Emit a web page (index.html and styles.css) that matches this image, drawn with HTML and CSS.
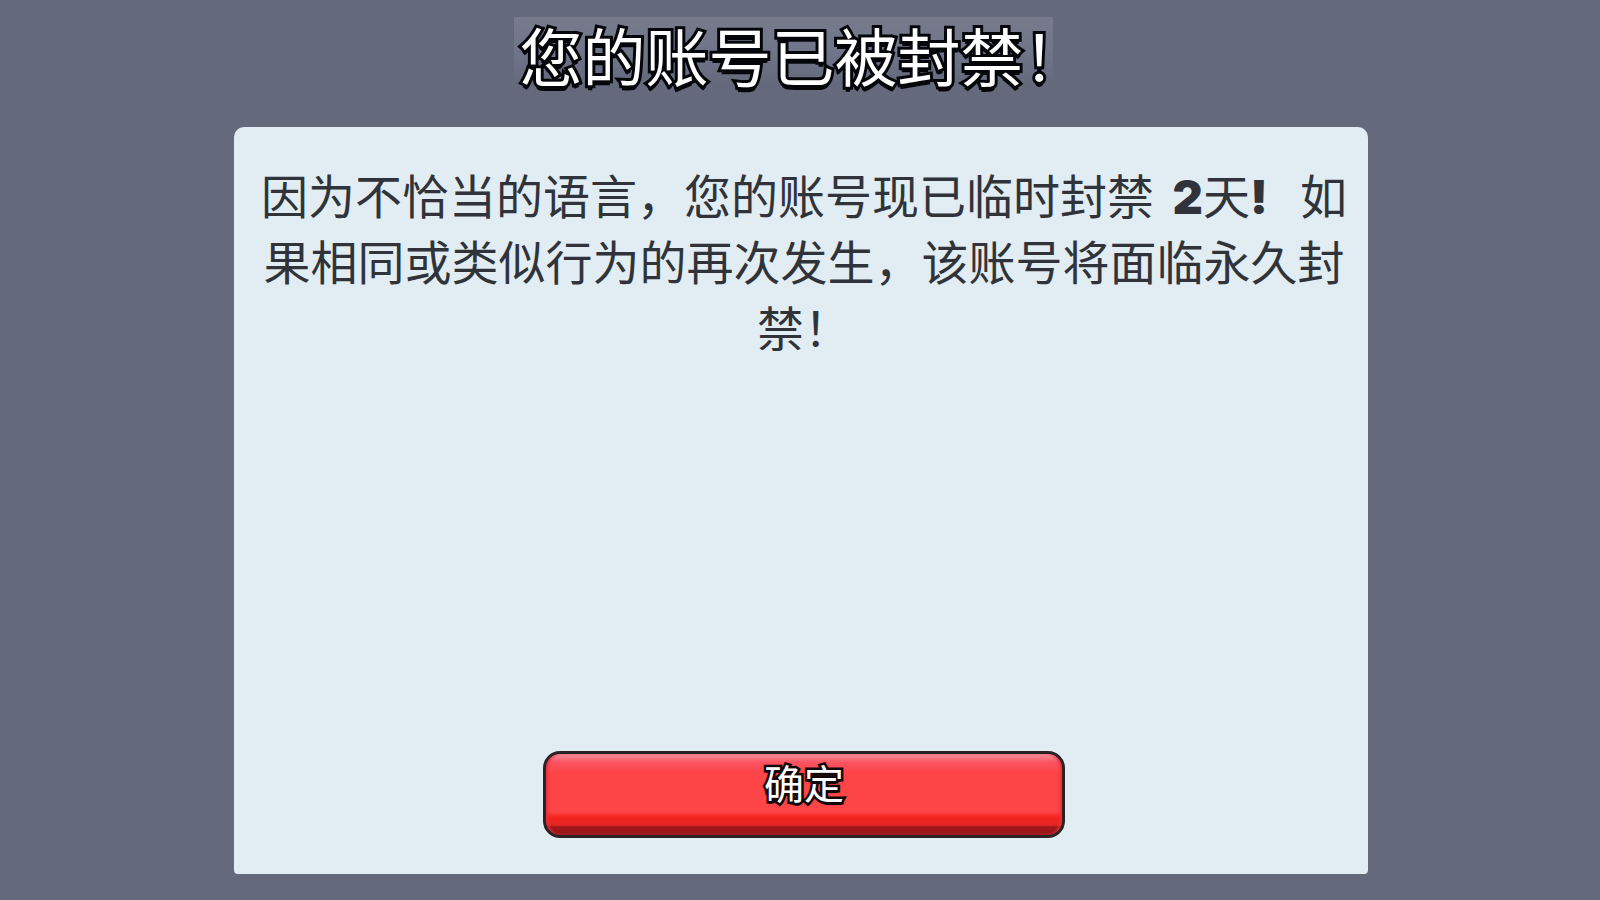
FILE: index.html
```html
<!DOCTYPE html>
<html lang="zh-CN">
<head>
<meta charset="utf-8">
<meta name="viewport" content="width=device-width, initial-scale=1">
<title>您的账号已被封禁！</title>
<link rel="stylesheet" href="styles.css">
</head>
<body>
<main class="screen">
  <h1 class="title">您的账号已被封禁！</h1>
  <section class="panel">
    <p class="message">因为不恰当的语言，您的账号现已临时封禁 <strong class="days">2</strong>天<strong class="bang">!</strong>如果相同或类似行为的再次发生，该账号将面临永久封禁！</p>
    <button class="confirm" type="button">确定</button>
  </section>
</main>
</body>
</html>
```
FILE: styles.css
```css
* {
  box-sizing: border-box;
}

body {
  margin: 0;
  background: #64697c;
  font-family: "Noto Sans CJK SC", "Noto Sans", sans-serif;
}

.screen {
  display: flex;
  flex-direction: column;
  align-items: center;
  min-height: 100vh;
  padding: 17px 14.5% 26px;
}

.title {
  margin: 0 0 36px;
  padding-left: 6px;
  background: linear-gradient(#777b8b, #70758a 45%, #64697c 90%) no-repeat 0 0 / calc(100% - 34px) 100%;
  color: #fff;
  font-size: 63px;
  font-weight: 400;
  line-height: 74px;
  white-space: nowrap;
  -webkit-text-stroke: 6px #05060a;
  paint-order: stroke fill;
  text-shadow: 0 5px 0 #05060a;
}

.panel {
  display: flex;
  flex: 1;
  flex-direction: column;
  align-items: center;
  justify-content: space-between;
  align-self: stretch;
  margin-left: 2px;
  padding: 32px 18px 36px 24px;
  border: 2px solid #e4ebf7;
  border-bottom: 0;
  border-radius: 10px 10px 4px 4px;
  background: #e1edf2;
}

.message {
  margin: 0;
  color: #30343a;
  font-size: 47px;
  line-height: 66px;
  text-align: center;
}

.days,
.bang {
  font-family: Inter, sans-serif;
  font-weight: 900;
  line-height: 1;
}

.days {
  margin-left: 8px;
}

.bang {
  margin-right: 32px;
}

.confirm {
  width: 48%;
  height: 87px;
  padding: 0 0 28px;
  border: 3px solid #2b2226;
  border-radius: 17px;
  background: linear-gradient(#f495a2 0, #fb5562 8px, #fd4448 18px, #fd4446 58px, #f5241f 63px, #e32625 71px, #a01618 73px, #96161a 100%);
  box-shadow: inset 3px 0 3px -1px #e8303a, inset -3px 0 3px -1px #e8303a;
  color: #fff;
  font-family: inherit;
  font-size: 40px;
  font-weight: 400;
  line-height: 56px;
  -webkit-text-stroke: 5px #140709;
  paint-order: stroke fill;
  text-shadow: 0 3px 0 #140709;
  cursor: pointer;
}
```
